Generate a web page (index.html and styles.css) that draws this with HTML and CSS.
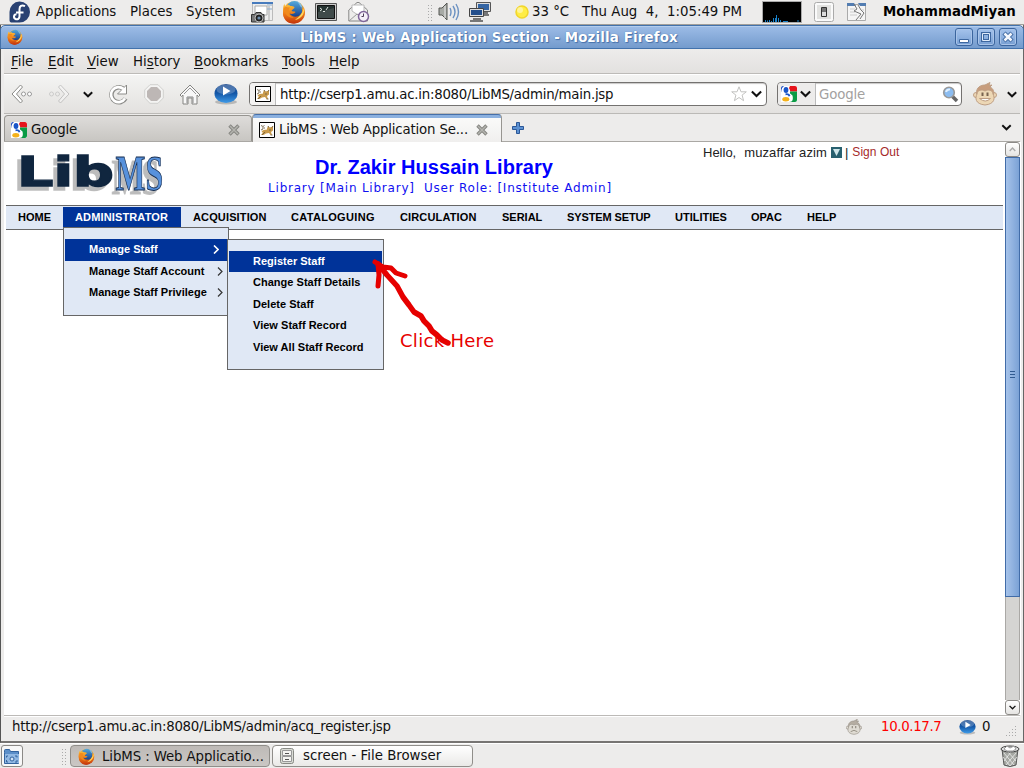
FILE: index.html
```html
<!DOCTYPE html>
<html lang="en">
<head>
<meta charset="utf-8">
<title>LibMS : Web Application Section</title>
<link rel="stylesheet" href="styles.css">
</head>
<body>
<svg class="defs" width="0" height="0" aria-hidden="true">
  <defs>
    <linearGradient id="gold" x1="0" y1="0" x2="0" y2="1"><stop offset="0" stop-color="#ffc63a"/><stop offset=".5" stop-color="#ef7d18"/><stop offset="1" stop-color="#c3340b"/></linearGradient>
    <linearGradient id="sea" x1="0" y1="0" x2="0" y2="1"><stop offset="0" stop-color="#55a9dc"/><stop offset="1" stop-color="#143a86"/></linearGradient>
    <linearGradient id="ball" x1="0" y1="0" x2="0" y2="1"><stop offset="0" stop-color="#1c4a8e"/><stop offset=".5" stop-color="#1458a8"/><stop offset="1" stop-color="#3f9be8"/></linearGradient>
  </defs>
  <symbol id="firefox" viewBox="0 0 24 24">
    <circle cx="12" cy="12.5" r="11" fill="url(#gold)"/>
    <circle cx="12.5" cy="9.5" r="8.4" fill="url(#sea)"/>
    <path d="M15 1.500c3 1 5 3 5.500 6.500-2-1-2.500-2-3.500-4z" fill="#a5d8f2" opacity=".6"/>
    <path d="M2.500 3.500c0 2 .5 2.500 1.500 3 1-2 3-2 4.500-.5 2 0 4 .5 4 1.500s-2.500 2-3 3.500c1 .8 3 0 4 1-1 2-4 2.500-6 1.500 2 3.500 8 4.500 11 1 2-2 2-4.500 1-7 3 2 3.600 6 2 9.500-2 4-6 6.500-10.500 6.500C5 23.500 1 19 1 12.500 1 9 1 6 2.500 3.500z" fill="url(#gold)"/>
    <path d="M2 8c2-2 3 0 6-.5-2 2-1.500 3 0 4-2 2 0 5 4 6-5 1-10-3-10-9.500z" fill="#f08a1d"/>
    <path d="M22 8c1 6-3 11-9 12 4-3 7-6 9-12z" fill="#ffd65b"/>
  </symbol>
  <symbol id="google" viewBox="0 0 16 16">
    <path fill="#fff" d="M0 0h16v16H0z"/>
    <path fill="#e5141c" d="M8 0h6q2 0 2 2v3.500H8z"/>
    <path fill="#0a9b45" d="M9 5.500h7V14q0 2-2 2H8z"/>
    <path fill="#2350bd" d="M0 2Q0 0 2 0h1v3L0 6z"/>
    <path fill="#fff" d="M3 0h6L8 2q2 3 .5 5l3 2.500Q13 16 8 16H1q-2-4 1-6l2-1-3-2q-2-4 2-7z"/>
    <ellipse cx="5" cy="4" rx="2.400" ry="3" fill="#1a56c8"/>
    <path d="M4.500 8.300q3.500-.5 4 2" fill="none" stroke="#1a56c8" stroke-width="1.800"/>
    <ellipse cx="4.800" cy="13.200" rx="3.500" ry="2.200" fill="#f4b11a"/>
  </symbol>
  <symbol id="tomcat" viewBox="0 0 16 16">
    <path fill="#fff" stroke="#000" d="M.5.5h15v15H.5z"/>
    <path d="M2.500 10c1-2 3-2.500 5-2l1.500-4 1.500 1.500 2-.5 1.500-1v4.500l-2 1.500 1 3h-1.500L10 11l-3 .5L4.500 13H2l2-2.500z" fill="#c99a4a"/>
    <path d="M2 3.500l2 1 1.500-1M3 6h3M9 4l1 1.500M14 4l-1 1.500M3 13l3-3M11.500 13h2M10 8h2M2 8l2-1" fill="none" stroke="#6f6044" stroke-width=".9"/>
  </symbol>
  <symbol id="play" viewBox="0 0 24 22">
    <ellipse cx="12" cy="19" rx="11" ry="2.500" fill="#000" opacity=".2"/>
    <ellipse cx="12" cy="10.500" rx="11.500" ry="9.500" fill="url(#ball)"/>
    <ellipse cx="12" cy="6.500" rx="9.500" ry="5" fill="#fff" opacity=".22"/>
    <path d="M9 3.500v9l7.500-4.500z" fill="#fff"/>
  </symbol>
  <symbol id="chevron" viewBox="0 0 10 7"><path d="M.8 1.200L5 5.300l4.200-4.100" fill="none" stroke="currentColor" stroke-width="1.900"/></symbol>
  <symbol id="close" viewBox="0 0 12 12"><path d="M1.500 1.500l9 9M10.500 1.500l-9 9" stroke="#858580" stroke-width="3.400"/><path d="M2 2l8 8M10 2l-8 8" stroke="#b4b4af" stroke-width="1.500"/></symbol>
  <symbol id="monkey" viewBox="0 0 24 24">
    <g stroke="currentColor" stroke-width="1"><circle cx="3" cy="13" r="2.500" fill="var(--face)"/><circle cx="21" cy="13" r="2.500" fill="var(--face)"/>
    <path d="M3.500 12C3 5 8 3 12 3l5-2.500-1 3 3-.5-2 2c4 2 4 5 3.500 8z" fill="var(--hair)"/>
    <path d="M4 12c0-4 5-5 8-3 3-2 8-1 8 3 2 4 2 10-8 11-10-1-10-7-8-11z" fill="var(--face)"/></g>
    <path d="M9.500 10.500v3.500M14.500 10.500v3.500" stroke="var(--eye)" stroke-width="2"/>
  </symbol>
</svg>

<div class="desktop">
  <header class="panel">
    <svg width="21" height="22" viewBox="0 0 21 22"><path d="M10.500.5a10.500 10.500 0 1 1 0 21H2Q.5 21 .5 19.500V11A10.300 10.300 0 0 1 10.500.5z" fill="#294172"/><path d="M16 5.200c-3.500-1.700-5.500 0-5.500 3v7c0 2.500-2 3.500-3.500 3-3-1-2.500-5 .5-5M7 11.500h7.500" fill="none" stroke="#fff" stroke-width="2"/></svg>
    <span class="apps">Applications</span><span>Places</span><span>System</span>
    <svg width="22" height="22" viewBox="0 0 22 22"><path d="M1.500 1.500h20v18h-20z" fill="#eee" stroke="#bbb"/><path d="M1 1h21v2H1z" fill="#477bbd"/><path d="M4 5h12v9H4zM18 5v14" fill="#fff" stroke="#aaa"/><path d="M16 4h5M16 8h5" stroke="#8cacce"/><path d="M.5 13.500h3l1.500-2h5l1.500 2H13V21H.5z" fill="#777" stroke="#333"/><circle cx="8" cy="17" r="4" fill="#222" stroke="#bbb"/><circle cx="8" cy="17" r="1.600" fill="#6c8cac"/></svg>
    <svg width="24" height="24"><use href="#firefox"/></svg>
    <svg width="22" height="19" viewBox="0 0 22 19"><path d="M.5.5h21v17H.5z" fill="#ccc" stroke="#555"/><path d="M2.500 2.500h17v13h-17z" fill="#263331" stroke="#111"/><path d="M5 5l2 1.500L5 8M8 8.500h2M11 7l2-3" stroke="#dfe5df" fill="none"/><path d="M3 9L19 5v10H3z" fill="#fff" opacity=".12"/></svg>
    <svg width="22" height="22" viewBox="0 0 22 22"><path d="M.8 9L9 1.500h2L19.500 9v11H.8z" fill="#ededeb" stroke="#888"/><path d="M4 4h12v7l-6 3-6-4z" fill="#fff" stroke="#bbb"/><path d="M1 20l8-7 9 6" fill="none" stroke="#999"/><circle cx="15.500" cy="15.500" r="5" fill="#f5f0f8" stroke="#80669a" stroke-width="1.500"/><path d="M15.500 12.500v3h-2" fill="none" stroke="#4c3c58"/></svg>
    <i class="grip"></i>
    <svg width="22" height="20" viewBox="0 0 22 20"><path d="M1 6h3l5-5v17l-5-5H1z" fill="#a7aaa5" stroke="#555753"/><path d="M7 4v12" stroke="#e8e8e8"/><path d="M12 6q2 4 0 8M15 4q4 6 0 12M18 2q5 8 0 16" fill="none" stroke="#6b91c1" stroke-width="1.400"/></svg>
    <svg width="22" height="20" viewBox="0 0 22 20"><path d="M7.500.5h14v9h-14z" fill="#ddd" stroke="#555"/><path d="M9 2h11v6H9z" fill="#3465a4"/><path d="M13 11h6M11 13h9" stroke="#777" stroke-width="2"/><path d="M.5 6.500h14v8H.5z" fill="#ddd" stroke="#444"/><path d="M2 8h11v5H2z" fill="#244f8c"/><path d="M4 17h8M1 19h13" stroke="#777" stroke-width="2"/></svg>
    <svg width="14" height="14" viewBox="0 0 14 14"><circle cx="7" cy="7" r="6" fill="#ffed45" stroke="#f1d62b" stroke-width="1.500"/><circle cx="5" cy="5" r="3" fill="#fff" opacity=".45"/></svg>
    <span class="temp">33 °C</span><span class="date">Thu Aug&nbsp; 4,&nbsp; 1:05:49 PM</span>
    <svg width="40" height="22" viewBox="0 0 40 22"><path d="M.5.5h39v21H.5z" fill="#000" stroke="#aaa"/><path d="M3.500 21v-2M5.500 21v-1.500M7.500 21v-2M9.500 21v-1M11.500 21v-4M13.500 21v-4M14.500 21v-7M16.500 21v-4M18.500 21v-2M21 20.500h5M35 20h2" stroke="#1881c9"/></svg>
    <svg width="20" height="20" viewBox="0 0 20 20"><rect x=".5" y=".5" width="19" height="19" rx="2" fill="#fafafa" stroke="#aaa"/><path d="M3 3h14v14H3z" fill="#e2e2e0"/><path d="M7.500 5.500h5v9h-5z" fill="#ddd" stroke="#333"/><path d="M8 6h4v4H8z" fill="#777"/></svg>
    <svg width="19" height="18" viewBox="0 0 19 18"><path d="M.5 1.500h18v16H.5z" fill="#f5f5f5" stroke="#aaa"/><path d="M0 0h7l2 3H0zM11 0h8v3h-6z" fill="#537db1"/><path d="M3 6h5M3 9h5M3 12h7M15 7h2" stroke="#ccc"/><path d="M7 1l3 5-3 2 7 3-5 6M11 2l3 5 3 3-4 6" fill="none" stroke="#777"/></svg>
    <b class="user">MohammadMiyan</b>
  </header>

  <main class="window">
    <div class="titlebar">
      <svg class="title-icon" width="16" height="16"><use href="#firefox"/></svg>
      <h1>LibMS : Web Application Section - Mozilla Firefox</h1>
      <div class="winbtns">
        <button><svg width="16" height="16"><path d="M3.500 10.500h9v3h-9z" fill="#fff" stroke="#3d67a0"/></svg></button>
        <button><svg width="16" height="16"><path d="M4.500 4.500h7v7h-7z" fill="none" stroke="#3d67a0" stroke-width="3"/><path d="M4.500 4.500h7v7h-7z" fill="none" stroke="#dfebfa"/></svg></button>
        <button><svg width="16" height="16"><path d="M4 4l8 8M12 4l-8 8" stroke="#3d67a0" stroke-width="4.500"/><path d="M4.500 4.500l7 7M11.500 4.500l-7 7" stroke="#f3f7fd" stroke-width="2.500"/></svg></button>
      </div>
    </div>
    <nav class="menubar"><span><u>F</u>ile</span><span><u>E</u>dit</span><span><u>V</u>iew</span><span>Hi<u>s</u>tory</span><span><u>B</u>ookmarks</span><span><u>T</u>ools</span><span><u>H</u>elp</span></nav>
    <div class="toolbar">
      <svg width="22" height="20" viewBox="0 0 22 20"><path d="M9.500 1L1 10l8.500 9 2-2L5.500 10l6-7z" fill="#fff" stroke="#8b8b88"/><circle cx="12.500" cy="10" r="2" fill="#fff" stroke="#999"/><circle cx="18.500" cy="10" r="2" fill="#fff" stroke="#999"/></svg>
      <svg class="dim" width="22" height="20" viewBox="0 0 22 20"><path d="M12.500 1L21 10l-8.500 9-2-2 6-7-6-7z" fill="#f8f8f8" stroke="#999"/><circle cx="3.500" cy="10" r="2" fill="none" stroke="#aaa"/><circle cx="9.500" cy="10" r="2" fill="none" stroke="#aaa"/></svg>
      <svg width="10" height="7"><use href="#chevron"/></svg>
      <svg width="20" height="21" viewBox="0 0 20 21"><path d="M17.500 14.500A7.500 7.500 0 1 1 15 4.500" fill="none" stroke="#8b8b88" stroke-width="4.500"/><path d="M18.500 1v9h-9l3.500-3.500z" fill="#fff" stroke="#8b8b88"/><path d="M17 14.300A7.500 7.500 0 1 1 15.500 5" fill="none" stroke="#fff" stroke-width="2.700"/></svg>
      <svg width="20" height="20" viewBox="0 0 20 20"><path d="M6 .7h8L19.300 6v8L14 19.300H6L.7 14V6z" fill="#f4f4f3" stroke="#d0d0ce"/><path d="M7 3h6l4 4v6l-4 4H7l-4-4V7z" fill="#bdb7b5"/></svg>
      <svg width="22" height="21" viewBox="0 0 22 21"><path d="M11 1L1 11l1.500 1.500L4 11v9h5v-6h4v6h5v-9l1.500 1.500L21 11z" fill="#f8f8f8" stroke="#858582"/><path d="M5 10l6-6 6 6" fill="none" stroke="#999"/><path d="M8 19v-6h6v6" fill="none" stroke="#888"/></svg>
      <svg width="24" height="22"><use href="#play"/></svg>
      <div class="field address">
        <span class="fav"><svg width="16" height="16"><use href="#tomcat"/></svg></span>
        <span class="url">http://cserp1.amu.ac.in:8080/LibMS/admin/main.jsp</span>
        <svg class="star" width="16" height="16" viewBox="0 0 16 16"><path d="M8 .8l2 5h5.300l-4.200 3.300 1.500 5.600L8 11.500l-4.600 3.200 1.500-5.600L.7 5.800H6z" fill="#fff" stroke="#c2c2c0"/></svg>
        <svg width="11" height="8"><use href="#chevron"/></svg>
      </div>
      <div class="field search">
        <span class="engine"><svg width="16" height="16"><use href="#google"/></svg><svg width="11" height="8"><use href="#chevron"/></svg></span>
        <span class="hint">Google</span>
        <svg width="17" height="17" viewBox="0 0 17 17"><path d="M10 10l5 5" stroke="#666" stroke-width="3.500"/><circle cx="7" cy="6.500" r="5.300" fill="#8bbcf0" stroke="#999" stroke-width="1.600"/><path d="M4 6q1-3 4-2.500" stroke="#e0f0ff" stroke-width="2" fill="none"/></svg>
      </div>
      <svg class="monkey" width="24" height="24"><use href="#monkey"/><path d="M6.500 16.500h11q-5 5-11 0z" fill="#fff" stroke="currentColor"/></svg>
      <svg width="10" height="7"><use href="#chevron"/></svg>
    </div>
    <div class="tabs">
      <div class="tab"><svg width="16" height="16"><use href="#google"/></svg><span class="tab-google">Google</span><svg width="12" height="12"><use href="#close"/></svg></div>
      <div class="tab active"><svg width="16" height="16"><use href="#tomcat"/></svg><span class="tab-lib">LibMS : Web Application Se...</span><svg width="12" height="12"><use href="#close"/></svg></div>
      <svg class="plus" width="12" height="12" viewBox="0 0 12 12"><path d="M4.500.5h3v4h4v3h-4v4h-3v-4h-4v-3h4z" fill="#5c91d2" stroke="#2b5797"/></svg>
      <svg class="alltabs" width="11" height="7"><use href="#chevron"/></svg>
    </div>

    <div class="viewport">
      <div class="page">
        <div class="banner">
          <svg class="logo" width="160" height="63" viewBox="0 0 160 63">
            <text class="lib" x="11" y="43.500" textLength="97" lengthAdjust="spacingAndGlyphs">Lib</text>
            <text class="ms" x="109.500" y="48" textLength="47.500" lengthAdjust="spacingAndGlyphs">MS</text>
          </svg>
          <div class="heading"><h2>Dr. Zakir Hussain Library</h2><p>Library [Main Library]&nbsp; User Role: [Institute Admin]</p></div>
          <div class="hello"><span class="hi">Hello,</span><span class="name">muzaffar azim</span><svg width="11" height="11"><path d="M0 0h11v11H0z" fill="#28606f"/><path d="M2 2h7L5.500 9z" fill="#cfe6ea"/></svg><span class="bar">|</span><a>Sign Out</a></div>
        </div>
        <nav class="nav">
          <span>HOME</span>
          <span class="on wide">ADMINISTRATOR</span>
          <span class="wide">ACQUISITION</span><span class="wider">CATALOGUING</span><span class="wide">CIRCULATION</span><span>SERIAL</span><span class="tight">SYSTEM SETUP</span><span>UTILITIES</span><span>OPAC</span><span>HELP</span>
        </nav>
        <ul class="menu first">
          <li class="on">Manage Staff<svg width="6" height="9"><path d="M1 .5l4 4-4 4"/></svg></li>
          <li>Manage Staff Account<svg width="6" height="9"><path d="M1 .5l4 4-4 4"/></svg></li>
          <li>Manage Staff Privilege<svg width="6" height="9"><path d="M1 .5l4 4-4 4"/></svg></li>
        </ul>
        <ul class="menu second">
          <li class="on">Register Staff</li><li>Change Staff Details</li><li>Delete Staff</li><li>View Staff Record</li><li>View All Staff Record</li>
        </ul>
        <span class="note">Click Here</span>
        <svg class="arrow" width="84" height="94" viewBox="0 0 84 94"><path d="M7 8L16 19 26 30 32 41 38 49 43 56 50 60 53 65 58 70 61 75 66 79 71 84 77 87" stroke-width="5.500"/><path d="M4 6L12 11 20 12 25 17 34 20" stroke-width="5"/><path d="M7 8L8 19 7 30" stroke-width="5"/></svg>
      </div>
      <div class="scroll"><i class="sb"><svg width="7" height="5" viewBox="0 0 10 7"><path d="M1 5.500l4-4 4 4" fill="none" stroke="#aaa" stroke-width="2"/></svg></i><i class="thumb"><svg width="6" height="8"><path d="M0 .5h5M0 3.500h5M0 6.500h5" stroke="#315b91"/></svg></i><i class="track"></i><i class="sb"><svg width="7" height="5"><use href="#chevron"/></svg></i></div>
    </div>
    <footer class="status">
      <span class="link">http://cserp1.amu.ac.in:8080/LibMS/admin/acq_register.jsp</span>
      <svg class="monkey grey" width="16" height="16" viewBox="0 0 24 24"><use href="#monkey"/><path d="M7 19q5-4 10 0" fill="none" stroke="currentColor" stroke-width="1.500"/></svg>
      <span class="ip">10.0.17.7</span>
      <svg width="17" height="16"><use href="#play"/></svg>
      <span>0</span>
      <svg class="resize" width="11" height="11"><path d="M9.500 0v1M6.500 3v1M9.500 3v1M3.500 6v1M6.500 6v1M9.500 6v1M.5 9v1M3.500 9v1M6.500 9v1M9.500 9v1" stroke="#aaa"/></svg>
    </footer>
  </main>

  <footer class="taskbar">
    <div class="show"><svg width="18" height="17" viewBox="0 0 18 17"><path d="M1.500 4.500v-2q0-1 1-1h4l1 2h8v12h-14z" fill="#5c8fc9" stroke="#33639e"/><path d="M2 6h14v9H2z" fill="#91b8e3"/><path d="M5 8H3.500v1.500M12 8h2v1.500M5 14H3.500v-2M12 14h2v-2" fill="none" stroke="#33639e"/><circle cx="9" cy="11" r="2" fill="#d4e5f8" stroke="#33639e"/></svg></div>
    <i class="grip"></i>
    <div class="task pressed"><svg width="17" height="17"><use href="#firefox"/></svg><span class="task-web">LibMS : Web Applicatio...</span></div>
    <div class="task"><svg width="14" height="16" viewBox="0 0 14 16"><rect x=".5" y=".5" width="13" height="15" rx="2" fill="#d9dbd5" stroke="#888a85"/><path d="M2.500 2.500h9v5h-9zM2.500 8.500h9v5h-9z" fill="#f5f5f2" stroke="#999"/><path d="M5 5.500h4M5 11.500h4" stroke="#555"/></svg><span class="task-file">screen - File Browser</span></div>
    <svg class="trash" width="20" height="22" viewBox="0 0 20 22"><path d="M2 4h16l-2 16q-6 3-12 0z" fill="#a6a8a3" stroke="#555"/><path d="M4 8l10 12M3 12l7 9M8 7l8 9M16 8L6 20M17 12l-7 9M11 7l-7 9" stroke="#eee" stroke-width=".8"/><ellipse cx="10" cy="4" rx="9" ry="3" fill="#ddd" stroke="#444"/><path d="M4 4l3-3 3 2 4-2 2 3-3 2H7z" fill="#fff" stroke="#999"/></svg>
  </footer>
</div>
</body>
</html>
```
FILE: styles.css
```css
* { box-sizing: border-box; }
body { margin: 0; font: 13.33px/16px "DejaVu Sans", sans-serif; color: #111; background: #edeceb; }
svg { display: block; flex: none; }
.defs { position: absolute; }
h1, h2, p, ul { margin: 0; padding: 0; }
i { display: block; }
.desktop { width: 1024px; height: 768px; overflow: hidden; display: flex; flex-direction: column; white-space: nowrap; }

.panel { height: 25px; flex: none; padding: 0 0 2px 9px; display: grid; align-items: center; background: #edeceb; border-bottom: 1px solid #a09e9a;
  grid-template-columns: 27px 94px 56px 65px 31px 33px 33px 79px 11px 31px 46px 17px 50px 180px 52px 33px 36px 1fr; }
.apps { letter-spacing: -.1px; }
.user { letter-spacing: .04px; color: #000; }
.grip { width: 5px; height: 17px; background: radial-gradient(circle, #aaa 0.6px, transparent 1px) 0 0 / 3px 3px; }

.window { flex: 1; min-height: 0; display: flex; flex-direction: column; border-left: 1px solid #555; border-right: 1px solid #666; border-bottom: 2px solid #777573; background: #edeceb; }
.titlebar { height: 24px; flex: none; margin: 0 -1px; padding: 0 6px 0 6px; display: flex; align-items: center; border: 1px solid #4272ac; border-radius: 5px 5px 0 0; background: linear-gradient(#9dbce7, #749bcd); box-shadow: inset 0 1px #b3cdee; }
.title-icon { margin-top: -1px; }
.titlebar h1 { flex: 1; padding-top: 1px; text-align: center; font-size: 13.33px; line-height: 20px; letter-spacing: .19px; color: #fff; text-shadow: 0 0 1px #3f6da9, 1px 1px 1px #4872aa; }
.winbtns { display: flex; gap: 4px; }
.winbtns button { width: 18px; height: 18px; padding: 0; border: 1px solid #3b659e; border-radius: 3px; background: linear-gradient(#a5c3ec, #779fd3); box-shadow: inset 0 0 0 1px #a9c4e9; }

.menubar { height: 25px; flex: none; margin: 0 3px; padding: 2px 0 0 7px; display: grid; align-items: center; grid-template-columns: 37px 39px 46px 61px 88px 47px 1fr; border-bottom: 1px solid #bdbbb8; background: linear-gradient(#edeceb, #e3e1df); }
u { text-decoration-thickness: 1px; text-underline-offset: 2px; }
.toolbar { height: 40px; flex: none; margin: 0 3px; padding: 0 0 0 7px; display: grid; align-items: center; grid-template-columns: 37px 35px 25px 36px 35px 35px 35px 528px 196px 34px 1fr; border-top: 1px solid #fff; border-bottom: 1px solid #bbb9b6; background: linear-gradient(#f4f4f3, #e3e1df); }
.dim { opacity: .5; }
.field { height: 24px; border: 1px solid #747270; border-radius: 4px; background: #fff; display: flex; align-items: center; overflow: hidden; box-shadow: inset 0 1px 1px #c8c7c6; }
.address { width: 518px; padding-right: 4px; }
.fav { width: 26px; height: 22px; padding: 3px 5px; background: #f3f2f1; border-right: 1px solid #bbb; }
.url { flex: 1; padding: 1px 0 0 4px; letter-spacing: -.25px; }
.star { margin-right: 4px; }
.search { width: 185px; padding-right: 2px; }
.engine { width: 38px; height: 22px; padding-left: 3px; display: flex; align-items: center; gap: 3px; background: #edeceb; border-right: 1px solid #bbb; }
.hint { flex: 1; padding: 1px 0 0 3px; letter-spacing: -.15px; color: #a3a19f; }
.monkey { color: #b69172; --face: #eed5ad; --hair: #c1906a; --eye: #654c35; opacity: .85; }
.grey { color: #8b8478; --face: #ddd9cf; --hair: #aca396; --eye: #8b8478; }

.tabs { height: 28px; flex: none; margin: 0 3px; display: flex; align-items: center; border-bottom: 1px solid #aaa8a4; background: #edeceb; }
.tab { width: 248px; height: 26px; align-self: flex-end; display: flex; align-items: center; padding: 2px 11px 0 6px; border: 1px solid #979591; border-bottom: 0; border-radius: 4px 4px 0 0; background: linear-gradient(#dedcda, #c8c6c2); }
.tab span { flex: 1; padding-left: 4px; }
.tab .tab-google { padding-top: 1px; letter-spacing: -.15px; }
.tab-lib { letter-spacing: -.17px; }
.tab.active { width: 250px; height: 28px; margin-bottom: -1px; padding: 2px 13px 0 6px; border-top: 1px solid #466fa8; background: linear-gradient(#8bb0df 0 3px, #fafaf9 3px, #f0efee); }
.plus { margin: 0 auto 0 10px; }
.alltabs { margin-right: 8px; }

.viewport { height: 573px; flex: none; margin: 0 0 0 3px; display: flex; background: #fff; border-right: 2px solid #edeceb; }
.page { position: relative; width: 1001px; padding: 0 2px; }
.banner { height: 63px; display: flex; }
.logo { width: 160px; overflow: visible; }
.lib { font: bold 40px "DejaVu Sans", sans-serif; fill: #10263f; stroke: #10263f; stroke-width: 1.4px; filter: drop-shadow(-3.500px 4px #bcbcbc); }
.ms { font: bold 50px "Liberation Serif", serif; fill: #5791dc; stroke: #12284a; stroke-width: .9px; filter: drop-shadow(-4px 4px #bcbcbc); }
.heading { width: 536px; padding: 14px 0 0; text-align: center; color: #00f; }
.heading h2 { font: bold 20px/22px "Liberation Sans", sans-serif; letter-spacing: .05px; }
.heading p { padding: 1px 0 0 12px; font-size: 12px; line-height: 18px; letter-spacing: .78px; color: #1010f0; }
.hello { height: 20px; padding-left: 1px; display: flex; align-items: center; font: 13px/15px "Liberation Sans", sans-serif; color: #222; }
.name { margin: 0 4px 0 8px; letter-spacing: .1px; }
.bar { margin: 0 4px 0 3px; }
.hello a { color: #a52a2a; font-size: 12px; letter-spacing: .05px; }
.nav { height: 25px; width: 997px; display: grid; grid-template-columns: 57px 118px 98px 109px 102px 65px 108px 76px 56px 1fr; padding-top: 1px; border-top: 1px solid #666; border-bottom: 1px solid #666; background: #e0e8f5; font: bold 11px/20px "Liberation Sans", sans-serif; color: #000; }
.nav span { height: 20px; padding: 0 12px; }
.wide { letter-spacing: .14px; }
.wider { letter-spacing: .32px; }
.tight { letter-spacing: -.12px; }
.nav .on, .menu .on { background: #003399; color: #fff; }
.menu { position: absolute; list-style: none; background: #e0e8f5; border: 1px solid #666; font: bold 11px/21.500px "Liberation Sans", sans-serif; color: #000; padding: 11px 1px 12px; }
.menu li { height: 21.500px; padding-left: 24px; display: flex; align-items: center; justify-content: space-between; letter-spacing: .02px; }
.menu svg { margin-right: 4px; fill: none; stroke: #333; stroke-width: 1.200px; }
.menu .on svg { margin-right: 8px; stroke: #fff; stroke-width: 1.600px; }
.first { left: 59px; top: 85px; width: 166px; height: 89px; }
.second { left: 223px; top: 97px; width: 157px; height: 131px; }
.second li { height: 21.400px; line-height: 21.400px; }
.note { position: absolute; left: 396px; top: 188px; font-size: 18px; line-height: 22px; letter-spacing: .3px; color: #e60000; }
.arrow { position: absolute; left: 367px; top: 114px; fill: none; stroke: #e60000; stroke-linecap: round; stroke-linejoin: round; }
.scroll { width: 15px; display: flex; flex-direction: column; }
.sb { height: 15px; display: flex; align-items: center; justify-content: center; border: 1px solid #8c8a87; border-radius: 3px; background: linear-gradient(#fff, #e5e4e2); }
.thumb { height: 440px; padding-bottom: 4px; display: flex; align-items: center; justify-content: center; border: 1px solid #416ca8; background: linear-gradient(90deg, #a6c3ea, #7ba2d6); }
.track { flex: 1; background: #d5d4d2; border: solid #aaa8a5; border-width: 0 1px; }
.status { flex: 1; margin: 0 3px; padding: 0 0 3px 8px; display: grid; align-items: center; grid-template-columns: 834px 35px 78px 23px 24px 11px; border-top: 1px solid #bcbab7; box-shadow: inset 0 1px #fff; }
.link { letter-spacing: -.25px; }
.ip { color: #f00; letter-spacing: -.35px; }
.resize { align-self: end; margin-bottom: 1px; }

.taskbar { height: 25px; flex: none; display: flex; align-items: center; border-top: 1px solid #fff; background: #edeceb; }
.show { width: 22px; height: 22px; margin: 0 38px 0 1px; display: grid; place-items: center; border: 1px solid #8b8986; border-radius: 3px; background: #f8f8f8; }
.task { width: 201px; height: 22px; margin-left: 2px; padding-left: 7px; display: flex; align-items: center; border: 1px solid #908e8a; border-radius: 4px; background: linear-gradient(#fff, #eae9e7); }
.task.pressed { width: 200px; margin-left: 4px; background: linear-gradient(#bebab7, #cac7c4); }
.task .task-web { padding: 1px 0 0 7px; letter-spacing: -.1px; }
.task .task-file { padding-left: 9px; }
.trash { margin: 0 4px 0 auto; }
```
